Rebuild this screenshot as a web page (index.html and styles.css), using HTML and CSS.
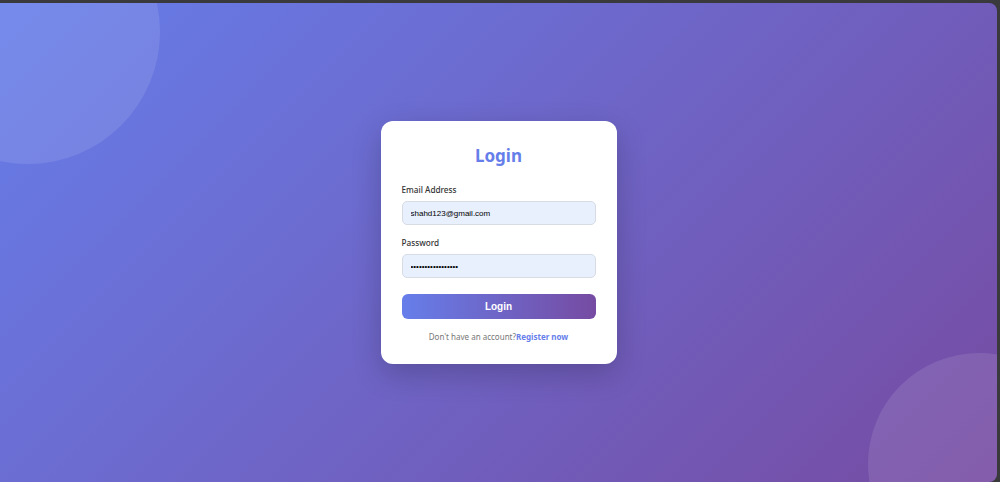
FILE: index.html
```html
<!DOCTYPE html>
<html lang="en">
<head>
  <meta charset="UTF-8">
  <meta name="viewport" content="width=device-width, initial-scale=1.0">
  <title>Login</title>
  <link rel="stylesheet" href="styles.css">
</head>
<body>
  <div class="screen">
    <div class="circle circle-top"></div>
    <div class="circle circle-bottom"></div>

    <div class="card">
      <h1>Login</h1>
      <form class="form">
        <div class="field">
          <label for="email">Email Address</label>
          <input type="email" id="email" value="shahd123@gmail.com">
        </div>
        <div class="field">
          <label for="password">Password</label>
          <input type="password" id="password" value="12345678901234567">
        </div>
        <button type="button" class="btn">Login</button>
      </form>
      <p class="switch">Don't have an account?<a href="#">Register now</a></p>
    </div>
  </div>
</body>
</html>
```

FILE: styles.css
```css
:root {
  --primary: #667eea;
  --secondary: #764ba2;
  --text-color: #333333;
  --muted: #777777;
  --input-bg: #e8f0fe;
  --border-color: #d6dbe4;
}

* {
  margin: 0;
  padding: 0;
  box-sizing: border-box;
}

body {
  background-color: #3a3a3c;
  font-family: 'Segoe UI', 'Noto Sans', sans-serif;
  height: 482px;
  overflow: hidden;
}

.screen {
  position: relative;
  height: 479px;
  margin-top: 3px;
  margin-right: 3px;
  border-radius: 0 8px 8px 0;
  background: linear-gradient(135deg, var(--primary) 0%, var(--secondary) 100%);
  overflow: hidden;
  display: flex;
  align-items: center;
  justify-content: center;
}

.circle {
  position: absolute;
  border-radius: 50%;
  background-color: rgba(255, 255, 255, 0.1);
}

.circle-top {
  width: 264px;
  height: 264px;
  top: -103px;
  left: -104px;
}

.circle-bottom {
  width: 222px;
  height: 222px;
  top: 350px;
  left: 868px;
}

.card {
  position: relative;
  width: 236px;
  background-color: #ffffff;
  border-radius: 12px;
  padding: 24px 21px 21px;
  box-shadow: 0 10px 30px rgba(0, 0, 0, 0.2);
}

h1 {
  text-align: center;
  color: var(--primary);
  font-size: 17px;
  font-weight: 700;
  line-height: 22px;
  margin-bottom: 17px;
}

.form {
  display: flex;
  flex-direction: column;
}

.field {
  display: flex;
  flex-direction: column;
  margin-bottom: 12px;
}

label {
  font-size: 8.2px;
  font-weight: 500;
  color: var(--text-color);
  line-height: 12px;
  margin-bottom: 5px;
}

input {
  height: 24px;
  padding: 0 8px;
  border: 1px solid var(--border-color);
  border-radius: 5px;
  background-color: var(--input-bg);
  font-family: 'Liberation Sans', Arial, sans-serif;
  font-size: 8px;
  color: #000000;
  outline: none;
}

.btn {
  height: 25px;
  margin-top: 4px;
  border: none;
  border-radius: 6px;
  background: linear-gradient(90deg, var(--primary), var(--secondary));
  color: #ffffff;
  font-family: 'Liberation Sans', Arial, sans-serif;
  font-size: 10px;
  font-weight: 700;
  cursor: pointer;
}

.switch {
  margin-top: 12px;
  text-align: center;
  font-size: 8px;
  line-height: 12px;
  color: var(--muted);
}

.switch a {
  color: var(--primary);
  font-weight: 700;
  text-decoration: none;
}
```
